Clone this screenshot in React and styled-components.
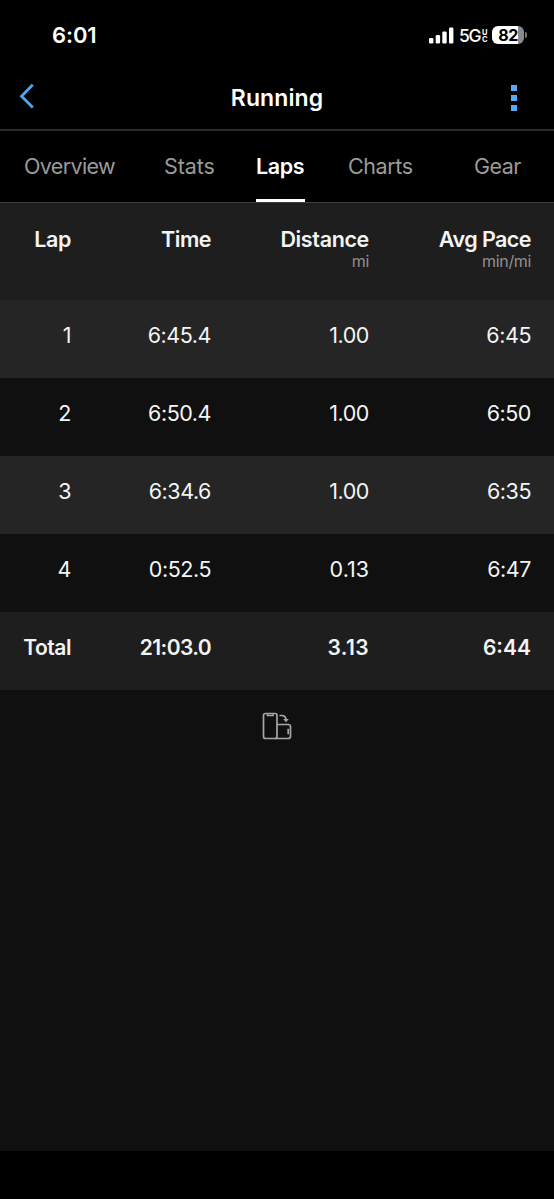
import React from "react";
import styled, { createGlobalStyle } from "styled-components";

const GlobalStyle = createGlobalStyle`
  * { box-sizing: border-box; }
  body {
    margin: 0;
    background: #000;
    font-family: Inter, "Liberation Sans", sans-serif;
    -webkit-font-smoothing: antialiased;
  }
`;

const Screen = styled.div`
  display: flex;
  flex-direction: column;
  width: 554px;
  height: 1199px;
  overflow: hidden;
  background: #000;
  color: #f4f4f4;
`;

const StatusBar = styled.header`
  display: flex;
  align-items: center;
  justify-content: space-between;
  height: 70px;
  padding: 0 27px 0 52px;
`;

const Clock = styled.time`
  font-size: 22px;
  line-height: 28px;
  font-weight: 600;
  letter-spacing: -0.1px;
  color: #fff;
`;

const StatusIcons = styled.div`
  display: flex;
  align-items: center;
  height: 20px;
`;

const Network = styled.div`
  display: flex;
  align-items: center;
  width: 29px;
  margin-left: 5px;
  padding-top: 1px;
  font-size: 17.5px;
  line-height: 20px;
  font-weight: 500;
  letter-spacing: -1.4px;
  color: #fff;
`;

const NetworkSuffix = styled.span`
  display: flex;
  flex-direction: column;
  margin: 0 0 0 2px;
  font-size: 7.5px;
  line-height: 7px;
  font-weight: 700;
  letter-spacing: 0;
`;

const Battery = styled.div`
  display: flex;
  align-items: center;
  margin-left: 4px;
`;

const BatteryBody = styled.div`
  width: 32px;
  height: 18px;
  border-radius: 6px;
  background: linear-gradient(to right, #fff 82%, #8b8b8b 82%);
  color: #000;
  font-size: 16px;
  line-height: 18px;
  font-weight: 700;
  letter-spacing: -0.5px;
  text-align: center;
`;

const BatteryTip = styled.div`
  width: 2px;
  height: 6px;
  margin-left: 1px;
  border-radius: 0 2px 2px 0;
  background: #777;
`;

const NavBar = styled.div`
  display: grid;
  grid-template-columns: 60px 1fr 60px;
  height: 61px;
  border-bottom: 2px solid #2c2c2c;
`;

const NavButton = styled.button`
  display: flex;
  align-items: flex-start;
  justify-content: ${({ $end }) => ($end ? "flex-end" : "flex-start")};
  padding: ${({ $end }) => ($end ? "15px 37px 0 0" : "13px 0 0 18px")};
  border: 0;
  background: none;
`;

const Title = styled.h1`
  margin: 0;
  padding-top: 14px;
  font-size: 23px;
  line-height: 28px;
  font-weight: 600;
  letter-spacing: 0.1px;
  text-align: center;
  color: #fff;
`;

const Tabs = styled.nav`
  display: flex;
  height: 72px;
  padding-left: 24px;
  border-bottom: 1px solid #404040;
`;

const Tab = styled.a`
  flex: none;
  width: ${({ $width }) => $width}px;
  height: 71px;
  margin-right: ${({ $gap }) => $gap}px;
  padding-top: 21px;
  border-bottom: 3px solid ${({ $active }) => ($active ? "#fff" : "transparent")};
  font-size: 21.5px;
  line-height: 28px;
  font-weight: ${({ $active }) => ($active ? 600 : 400)};
  letter-spacing: ${({ $spacing }) => $spacing}px;
  white-space: nowrap;
  color: ${({ $active }) => ($active ? "#fff" : "#9b9b9b")};
`;

const Content = styled.main`
  height: 948px;
  background: #101010;
`;

const Table = styled.table`
  width: 554px;
  table-layout: fixed;
  border-collapse: collapse;
  font-size: 21.5px;
  line-height: 28px;
`;

const Row = styled.tr`
  height: ${({ $head }) => ($head ? 97 : 78)}px;
  background: ${({ $tone }) => $tone};
`;

const Cell = styled.td`
  padding: 21px 0 0;
  vertical-align: top;
  text-align: right;
  white-space: nowrap;
  letter-spacing: ${({ $spacing = -0.45 }) => $spacing}px;
`;

const HeadCell = styled(Cell)`
  padding-top: 22px;
  font-weight: 600;
`;

const TotalCell = styled(Cell)`
  padding-top: 22px;
  font-size: 21px;
  font-weight: 600;
`;

const Unit = styled.div`
  margin-top: -2px;
  font-size: 16px;
  line-height: 21px;
  font-weight: 400;
  letter-spacing: -0.35px;
  color: #909090;
`;

const RotateHint = styled.div`
  display: flex;
  justify-content: center;
  padding-top: 21px;
`;

const laps = [
  ["1", "6:45.4", "1.00", "6:45"],
  ["2", "6:50.4", "1.00", "6:50"],
  ["3", "6:34.6", "1.00", "6:35"],
  ["4", "0:52.5", "0.13", "6:47"],
];

const totals = [
  { value: "Total", spacing: -0.45 },
  { value: "21:03.0", spacing: -0.6 },
  { value: "3.13", spacing: 0.4 },
  { value: "6:44", spacing: 0 },
];

const tabs = [
  { label: "Overview", width: 91, gap: 49, spacing: -0.65 },
  { label: "Stats", width: 50, gap: 42, spacing: -0.1 },
  { label: "Laps", width: 49, gap: 43, spacing: -0.4, active: true },
  { label: "Charts", width: 65, gap: 61, spacing: -0.4 },
  { label: "Gear", width: 48, gap: 0, spacing: -0.5 },
];

const columns = [
  { label: "Lap", spacing: -0.35 },
  { label: "Time", spacing: -0.5 },
  { label: "Distance", unit: "mi", spacing: -0.35 },
  { label: "Avg Pace", unit: "min/mi", spacing: -0.55 },
];

function SignalIcon() {
  return (
    <svg width="25" height="17" viewBox="0 0 25 17" fill="#fff">
      <rect x="0" y="11" width="4.4" height="5.5" rx="1.3" />
      <rect x="6.7" y="8" width="4.4" height="8.5" rx="1.3" />
      <rect x="13.3" y="4.4" width="4.4" height="12.1" rx="1.3" />
      <rect x="20" y="0.5" width="4.4" height="16" rx="1.3" />
    </svg>
  );
}

function BackIcon() {
  return (
    <svg width="18" height="27" viewBox="0 0 18 27" fill="none" stroke="#4fa3f2" strokeWidth="2.8">
      <path d="M14.8 1.8L3.5 13.2L14.8 24.6" />
    </svg>
  );
}

function MoreIcon() {
  return (
    <svg width="6" height="26" viewBox="0 0 6 26" fill="#57a9f5">
      <rect width="6" height="6" />
      <rect y="10" width="6" height="6" />
      <rect y="20" width="6" height="6" />
    </svg>
  );
}

function RotateIcon() {
  return (
    <svg width="30" height="30" viewBox="0 0 30 30" fill="none" stroke="#a6a6a6" strokeWidth="1.7">
      <rect x="1.5" y="2.5" width="13.5" height="25" rx="2" />
      <path d="M5.5 3.2V4.5H11V3.2" />
      <path d="M15 13.5H26.2Q28.5 13.5 28.5 15.8V25.2Q28.5 27.5 26.2 27.5H13" />
      <path d="M26.2 17.8V23.2" />
      <path d="M17.5 4.5H19.5Q24 4.5 24 9" />
      <path d="M21.2 8H26.8L24 11.2Z" fill="#a6a6a6" stroke="none" />
    </svg>
  );
}

export default function App() {
  return (
    <Screen>
      <GlobalStyle />
      <StatusBar>
        <Clock>6:01</Clock>
        <StatusIcons>
          <SignalIcon />
          <Network>
            5G
            <NetworkSuffix>
              <span>U</span>
              <span>C</span>
            </NetworkSuffix>
          </Network>
          <Battery>
            <BatteryBody>82</BatteryBody>
            <BatteryTip />
          </Battery>
        </StatusIcons>
      </StatusBar>
      <NavBar>
        <NavButton aria-label="Back">
          <BackIcon />
        </NavButton>
        <Title>Running</Title>
        <NavButton $end aria-label="More">
          <MoreIcon />
        </NavButton>
      </NavBar>
      <Tabs>
        {tabs.map((tab) => (
          <Tab
            key={tab.label}
            $width={tab.width}
            $gap={tab.gap}
            $active={tab.active}
            $spacing={tab.spacing}
          >
            {tab.label}
          </Tab>
        ))}
      </Tabs>
      <Content>
        <Table>
          <colgroup>
            <col style={{ width: 71 }} />
            <col style={{ width: 140 }} />
            <col style={{ width: 158 }} />
            <col style={{ width: 162 }} />
            <col style={{ width: 23 }} />
          </colgroup>
          <thead>
            <Row $head $tone="#1e1e1e">
              {columns.map((column) => (
                <HeadCell as="th" key={column.label} $spacing={column.spacing}>
                  {column.label}
                  {column.unit && <Unit>{column.unit}</Unit>}
                </HeadCell>
              ))}
              <Cell />
            </Row>
          </thead>
          <tbody>
            {laps.map((lap, index) => (
              <Row key={lap[0]} $tone={index % 2 === 0 ? "#252525" : "#101010"}>
                {lap.map((value, i) => (
                  <Cell key={i} $spacing={value === "0.13" ? 0 : undefined}>
                    {value}
                  </Cell>
                ))}
                <Cell />
              </Row>
            ))}
            <Row $tone="#1e1e1e">
              {totals.map((total) => (
                <TotalCell key={total.value} $spacing={total.spacing}>
                  {total.value}
                </TotalCell>
              ))}
              <Cell />
            </Row>
          </tbody>
        </Table>
        <RotateHint>
          <RotateIcon />
        </RotateHint>
      </Content>
    </Screen>
  );
}
